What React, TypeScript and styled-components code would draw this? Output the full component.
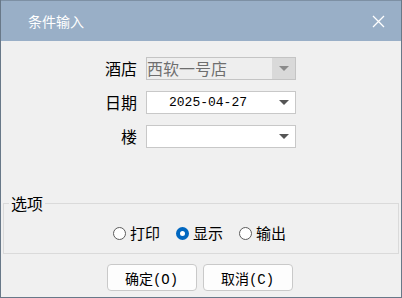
import React from "react"
import styled, { createGlobalStyle } from "styled-components"

const GlobalStyle = createGlobalStyle`
  html, body {
    margin: 0;
    padding: 0;
    background: #f0f0f0;
  }
  * {
    box-sizing: border-box;
  }
`

const cjk = `"Noto Sans CJK SC", "Microsoft YaHei", sans-serif`
const mono = `"Liberation Mono", "Noto Sans CJK SC", monospace`

const Window = styled.div`
  width: 402px;
  height: 298px;
  border: 1px solid #687888;
  border-top: none;
  background: #f0f0f0;
  display: flex;
  flex-direction: column;
  font-family: ${cjk};
  color: #000;
`

const TitleBar = styled.div`
  height: 41px;
  flex: none;
  background: #99afc7;
  border-top: 1px solid #7d90a4;
  display: flex;
  align-items: center;
  justify-content: space-between;
  padding: 0 16px 0 27px;
`

const Title = styled.span`
  color: #fff;
  font-size: 14px;
`

const CloseIcon = () => (
  <svg width="13" height="13" viewBox="0 0 13 13">
    <path d="M1 1 L12 12 M12 1 L1 12" stroke="#fff" strokeWidth="1.3" />
  </svg>
)

const Form = styled.div`
  display: grid;
  grid-template-columns: 52px 150px;
  column-gap: 9px;
  row-gap: 11px;
  padding: 16px 0 0 84px;
`

const Label = styled.label`
  font-size: 16px;
  line-height: 22px;
  height: 22px;
  text-align: right;
`

const Combo = styled.div<{ $disabled?: boolean }>`
  height: 23px;
  border: 1px solid ${({ $disabled }) => ($disabled ? "#c4c4c4" : "#c8c8c8")};
  background: ${({ $disabled }) => ($disabled ? "#eeeeee" : "#ffffff")};
  display: flex;
  align-items: stretch;
`

const ComboText = styled.span<{ $mono?: boolean; $disabled?: boolean }>`
  flex: 1;
  font-family: ${({ $mono }) => ($mono ? mono : cjk)};
  font-size: ${({ $mono }) => ($mono ? "13px" : "16px")};
  line-height: 21px;
  color: ${({ $disabled }) => ($disabled ? "#6e6e6e" : "#000")};
  padding-left: ${({ $mono }) => ($mono ? "22px" : "0")};
  white-space: nowrap;
`

const ArrowBox = styled.span<{ $disabled?: boolean }>`
  width: 23px;
  flex: none;
  display: flex;
  align-items: center;
  justify-content: center;
  background: ${({ $disabled }) => ($disabled ? "#d9d9d9" : "transparent")};
`

const Arrow = ({ color }: { color: string }) => (
  <svg width="10" height="5" viewBox="0 0 10 5">
    <path d="M0 0 H10 L5 5 Z" fill={color} />
  </svg>
)

const ComboBox = ({
  text,
  disabled,
  mono: isMono,
}: {
  text?: string
  disabled?: boolean
  mono?: boolean
}) => (
  <Combo $disabled={disabled}>
    <ComboText $mono={isMono} $disabled={disabled}>
      {text}
    </ComboText>
    <ArrowBox $disabled={disabled}>
      <Arrow color={disabled ? "#8a8a8a" : "#555"} />
    </ArrowBox>
  </Combo>
)

const Options = styled.fieldset`
  margin: 46px 2px 0 2px;
  padding: 11px 0 0 0;
  height: 60px;
  border: 1px solid #dadada;
  min-width: 0;
`

const Legend = styled.legend`
  font-size: 16px;
  line-height: 18px;
  padding: 0 2px;
  margin-left: 5px;
`

const RadioRow = styled.div`
  display: flex;
  justify-content: center;
  gap: 16px;
  padding-right: 3px;
`

const RadioItem = styled.label`
  display: flex;
  align-items: center;
  gap: 4px;
  font-size: 15px;
  line-height: 20px;
`

const RadioDot = styled.span<{ $checked?: boolean }>`
  width: 13px;
  height: 13px;
  border-radius: 50%;
  flex: none;
  border: ${({ $checked }) => ($checked ? "4px solid #0067c0" : "1px solid #5c5c5c")};
  background: #fff;
`

const Buttons = styled.div`
  display: flex;
  justify-content: center;
  gap: 6px;
  margin-top: 10px;
  padding-right: 3px;
`

const Button = styled.button`
  width: 90px;
  height: 27px;
  border: 1px solid #c9c9c9;
  border-radius: 4px;
  background: #fdfdfd;
  font-family: ${mono};
  font-size: 14px;
  color: #000;
  padding: 0;
`

const App = () => {
  return (
    <>
      <GlobalStyle />
      <Window>
        <TitleBar>
          <Title>条件输入</Title>
          <CloseIcon />
        </TitleBar>
        <Form>
          <Label>酒店</Label>
          <ComboBox text="西软一号店" disabled />
          <Label>日期</Label>
          <ComboBox text="2025-04-27" mono />
          <Label>楼</Label>
          <ComboBox />
        </Form>
        <Options>
          <Legend>选项</Legend>
          <RadioRow>
            <RadioItem>
              <RadioDot />
              打印
            </RadioItem>
            <RadioItem>
              <RadioDot $checked />
              显示
            </RadioItem>
            <RadioItem>
              <RadioDot />
              输出
            </RadioItem>
          </RadioRow>
        </Options>
        <Buttons>
          <Button>确定(O)</Button>
          <Button>取消(C)</Button>
        </Buttons>
      </Window>
    </>
  )
}

export default App
